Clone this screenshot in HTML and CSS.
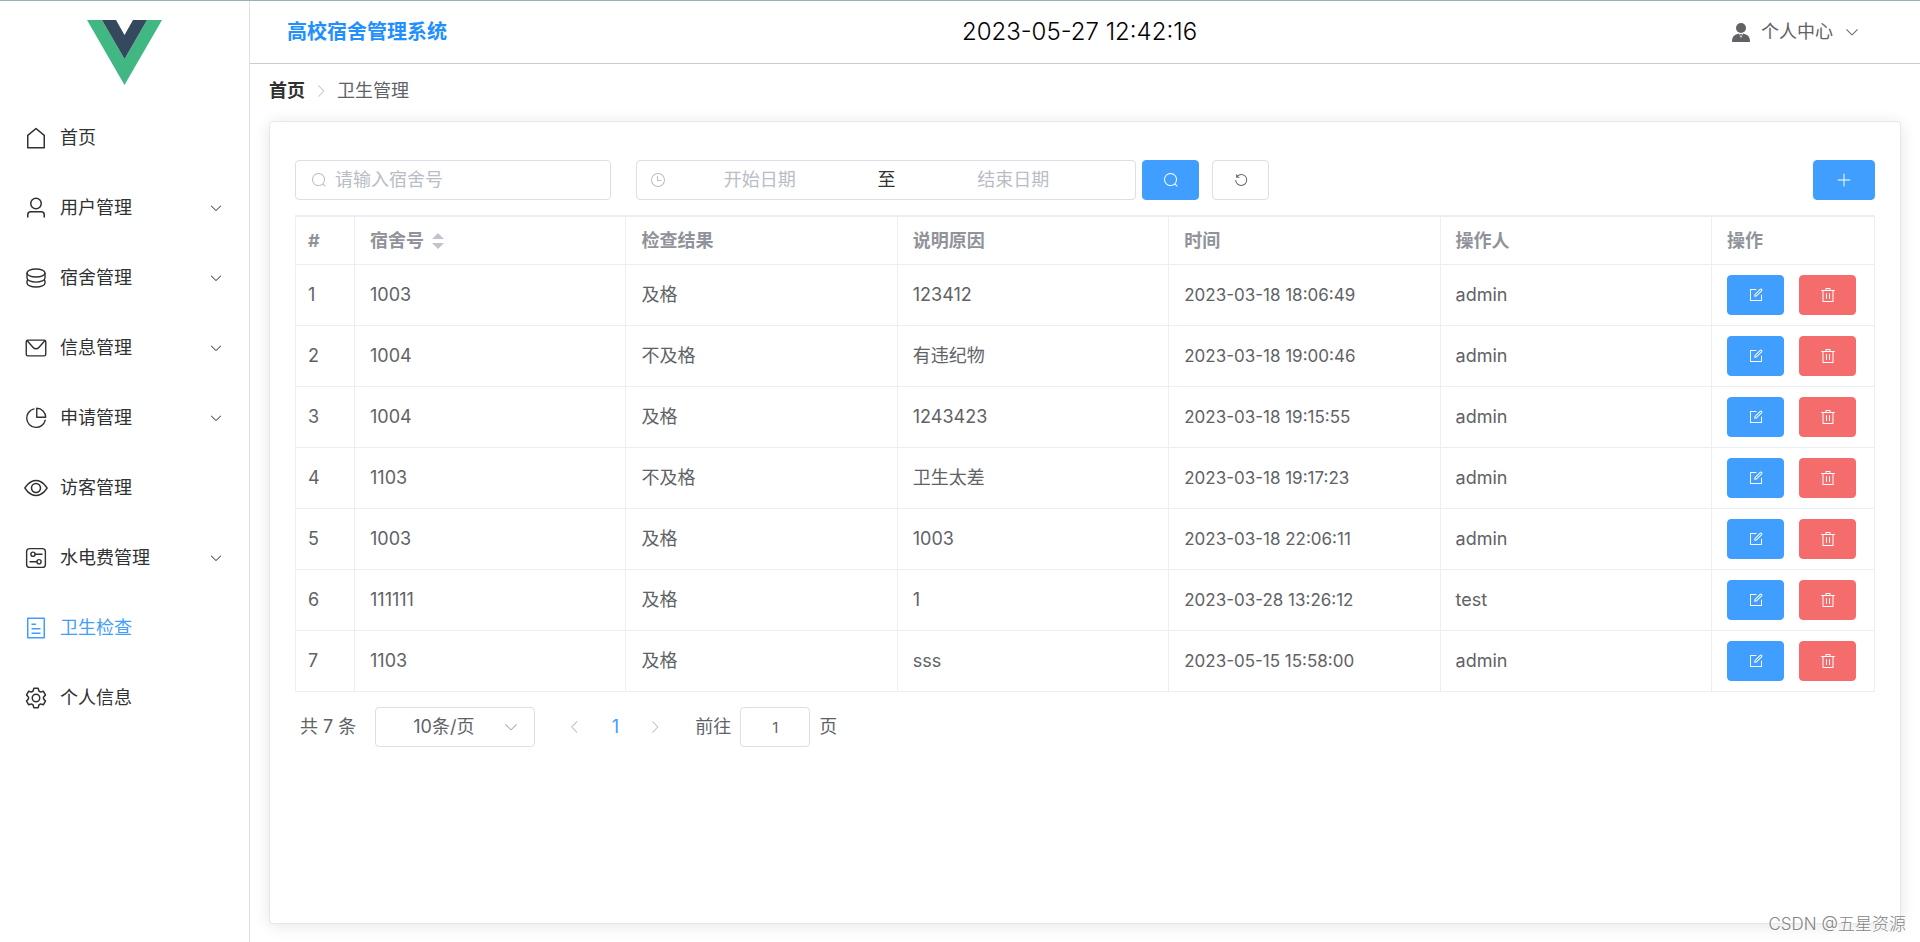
FILE: index.html
```html
<!DOCTYPE html>
<html lang="zh-CN">
<head>
<meta charset="utf-8">
<title>高校宿舍管理系统</title>
<link rel="stylesheet" href="styles.css">
</head>
<body>
<svg class="sprite" aria-hidden="true">
  <symbol id="i-house" viewBox="0 0 1024 1024"><path d="M192 413.952V896h640V413.952L512 147.328 192 413.952zM139.52 374.4l352-293.312a32 32 0 0 1 40.96 0l352 293.312A32 32 0 0 1 896 398.976V928a32 32 0 0 1-32 32H160a32 32 0 0 1-32-32V398.976a32 32 0 0 1 11.52-24.576z"/></symbol>
  <symbol id="i-user" viewBox="0 0 1024 1024"><path d="M512 512a192 192 0 1 0 0-384 192 192 0 0 0 0 384zm0 64a256 256 0 1 1 0-512 256 256 0 0 1 0 512zm320 320v-96a96 96 0 0 0-96-96H288a96 96 0 0 0-96 96v96a32 32 0 1 1-64 0v-96a160 160 0 0 1 160-160h448a160 160 0 0 1 160 160v96a32 32 0 1 1-64 0z"/></symbol>
  <symbol id="i-coin" viewBox="0 0 1024 1024"><g class="line"><ellipse cx="512" cy="300" rx="384" ry="172"/><path d="M128 310v204c0 96 172 174 384 174s384-78 384-174V310M160 600c-22 26-32 50-32 76v46c0 96 172 174 384 174s384-78 384-174v-46c0-26-10-50-32-76"/></g></symbol>
  <symbol id="i-message" viewBox="0 0 1024 1024"><g class="line"><rect x="96" y="176" width="832" height="672" rx="72"/><path d="M128 192l262 296c68 76 176 76 244 0l262-296"/></g></symbol>
  <symbol id="i-pie" viewBox="0 0 1024 1024"><g class="line"><path d="M424 124a400 400 0 1 0 482 482"/><path d="M544 98v382h382A384 384 0 0 0 544 98z"/></g></symbol>
  <symbol id="i-view" viewBox="0 0 1024 1024"><path d="M512 160c320 0 512 352 512 352S832 864 512 864 0 512 0 512s192-352 512-352zm0 64c-225.28 0-384.128 208.064-436.8 288 52.608 79.872 211.456 288 436.8 288 225.28 0 384.128-208.064 436.8-288-52.608-79.872-211.456-288-436.8-288zm0 64a224 224 0 1 1 0 448 224 224 0 0 1 0-448zm0 64a160.192 160.192 0 0 0-160 160c0 88.192 71.744 160 160 160s160-71.808 160-160-71.744-160-160-160z"/></symbol>
  <symbol id="i-setup" viewBox="0 0 1024 1024"><g class="line"><rect x="112" y="112" width="800" height="800" rx="128"/><circle cx="384" cy="352" r="90"/><path d="M474 352h294M256 672h294"/><circle cx="640" cy="672" r="90"/></g></symbol>
  <symbol id="i-tickets" viewBox="0 0 1024 1024"><path d="M192 128v768h640V128H192zm-32-64h704a32 32 0 0 1 32 32v832a32 32 0 0 1-32 32H160a32 32 0 0 1-32-32V96a32 32 0 0 1 32-32zm160 448h384v64H320v-64zm0-192h192v64H320v-64zm0 384h384v64H320v-64z"/></symbol>
  <symbol id="i-setting" viewBox="0 0 1024 1024"><path d="M600.704 64a32 32 0 0 1 30.464 22.208l35.2 109.376c14.784 7.232 28.928 15.36 42.432 24.512l112.384-24.192a32 32 0 0 1 34.432 15.36L944.32 364.8a32 32 0 0 1-4.032 37.504l-77.12 85.12a357.12 357.12 0 0 1 0 49.024l77.12 85.248a32 32 0 0 1 4.032 37.504l-88.704 153.6a32 32 0 0 1-34.432 15.296L708.8 803.904c-13.44 9.088-27.648 17.28-42.368 24.512l-35.264 109.376A32 32 0 0 1 600.704 960H423.296a32 32 0 0 1-30.464-22.208L357.696 828.48a351.616 351.616 0 0 1-42.56-24.64l-112.32 24.256a32 32 0 0 1-34.432-15.36L79.68 659.2a32 32 0 0 1 4.032-37.504l77.12-85.248a357.12 357.12 0 0 1 0-48.896l-77.12-85.248A32 32 0 0 1 79.68 364.8l88.704-153.6a32 32 0 0 1 34.432-15.296l112.32 24.256c13.568-9.152 27.776-17.408 42.56-24.64l35.2-109.312A32 32 0 0 1 423.232 64H600.64zm-23.424 64H446.72l-36.352 113.088-24.512 11.968a294.113 294.113 0 0 0-34.816 20.096l-22.656 15.36-116.224-25.088-65.28 113.152 79.68 88.192-1.92 27.136a293.12 293.12 0 0 0 0 40.192l1.92 27.136-79.808 88.192 65.344 113.152 116.224-25.024 22.656 15.296a294.113 294.113 0 0 0 34.816 20.096l24.512 11.968L446.72 896h130.688l36.48-113.152 24.448-11.904a288.282 288.282 0 0 0 34.752-20.096l22.592-15.296 116.288 25.024 65.28-113.152-79.744-88.192 1.92-27.136a293.12 293.12 0 0 0 0-40.256l-1.92-27.136 79.808-88.128-65.344-113.152-116.288 24.96-22.592-15.232a287.616 287.616 0 0 0-34.752-20.096l-24.448-11.904L577.344 128zM512 320a192 192 0 1 1 0 384 192 192 0 0 1 0-384zm0 64a128 128 0 1 0 0 256 128 128 0 0 0 0-256z"/></symbol>
  <symbol id="i-down" viewBox="0 0 1024 1024"><path d="M831.872 340.864 512 652.672 192.128 340.864a30.592 30.592 0 0 0-42.752 0 29.12 29.12 0 0 0 0 41.6L489.664 714.24a32 32 0 0 0 44.672 0l340.288-331.712a29.12 29.12 0 0 0 0-41.728 30.592 30.592 0 0 0-42.752 0z"/></symbol>
  <symbol id="i-right" viewBox="0 0 1024 1024"><path d="M340.864 149.312a30.592 30.592 0 0 0 0 42.752L652.736 512 340.864 831.872a30.592 30.592 0 0 0 0 42.752 29.12 29.12 0 0 0 41.728 0L714.24 534.336a32 32 0 0 0 0-44.672L382.592 149.376a29.12 29.12 0 0 0-41.728 0z"/></symbol>
  <symbol id="i-left" viewBox="0 0 1024 1024"><path d="M609.408 149.376 277.76 489.6a32 32 0 0 0 0 44.672l331.648 340.352a29.12 29.12 0 0 0 41.728 0 30.592 30.592 0 0 0 0-42.752L339.264 511.936l311.872-319.872a30.592 30.592 0 0 0 0-42.688 29.12 29.12 0 0 0-41.728 0z"/></symbol>
  <symbol id="i-search" viewBox="0 0 1024 1024"><path d="m795.904 750.72 124.992 124.928a32 32 0 0 1-45.248 45.248L750.656 795.904a416 416 0 1 1 45.248-45.248zM480 832a352 352 0 1 0 0-704 352 352 0 0 0 0 704z"/></symbol>
  <symbol id="i-clock" viewBox="0 0 1024 1024"><path d="M512 896a384 384 0 1 0 0-768 384 384 0 0 0 0 768zm0 64a448 448 0 1 1 0-896 448 448 0 0 1 0 896zM480 256a32 32 0 0 1 32 32v224h192a32 32 0 0 1 0 64H480a32 32 0 0 1-32-32V288a32 32 0 0 1 32-32z"/></symbol>
  <symbol id="i-refresh" viewBox="0 0 1024 1024"><path d="M289.088 296.704h92.992a32 32 0 0 1 0 64H232.96a32 32 0 0 1-32-32V179.712a32 32 0 0 1 64 0v50.56a384 384 0 0 1 643.84 282.88 384 384 0 0 1-383.936 384 384 384 0 0 1-384-384h64a320 320 0 1 0 640 0 320 320 0 0 0-555.712-216.448z"/></symbol>
  <symbol id="i-plus" viewBox="0 0 1024 1024"><path d="M480 480V128a32 32 0 0 1 64 0v352h352a32 32 0 1 1 0 64H544v352a32 32 0 1 1-64 0V544H128a32 32 0 0 1 0-64h352z"/></symbol>
  <symbol id="i-edit" viewBox="0 0 1024 1024"><path d="M832 512a32 32 0 1 1 64 0v352a32 32 0 0 1-32 32H160a32 32 0 0 1-32-32V160a32 32 0 0 1 32-32h352a32 32 0 0 1 0 64H192v640h640V512z"/><path d="m469.952 554.24 52.8-7.552L847.104 222.4a32 32 0 1 0-45.248-45.248L477.44 501.44l-7.552 52.8zm422.4-422.4a96 96 0 0 1 0 135.808l-331.84 331.84a32 32 0 0 1-18.112 9.088L436.8 623.68a32 32 0 0 1-36.224-36.224l15.104-105.6a32 32 0 0 1 9.024-18.112l331.904-331.84a96 96 0 0 1 135.744 0z"/></symbol>
  <symbol id="i-delete" viewBox="0 0 1024 1024"><path d="M160 256H96a32 32 0 0 1 0-64h256V95.936a32 32 0 0 1 32-32h256a32 32 0 0 1 32 32V192h256a32 32 0 1 1 0 64h-64v672a32 32 0 0 1-32 32H192a32 32 0 0 1-32-32V256zm448-64v-64H416v64h192zM224 896h576V256H224v640zm192-128a32 32 0 0 1-32-32V416a32 32 0 0 1 64 0v320a32 32 0 0 1-32 32zm192 0a32 32 0 0 1-32-32V416a32 32 0 0 1 64 0v320a32 32 0 0 1-32 32z"/></symbol>
  <symbol id="i-person" viewBox="0 0 18 19"><circle cx="9" cy="5" r="5"/><path d="M0 19c0-4 1-6 3-7 1-.6 2.500-1 4-1.500L9 15l2-4.500c1.500.5 3 .9 4 1.500 2 1 3 3 3 7z"/><path d="M8 11h2l-.5 2h-1z"/></symbol>
</svg>

<div class="app">
  <aside class="sidebar">
    <svg class="logo" viewBox="0 0 75 65" role="img" aria-label="Vue">
      <path fill="#41b883" d="M0 0h15l22.500 39L60 0h15L37.500 65z"/>
      <path fill="#34495e" d="M15 0h14l8.500 15L46 0h14L37.500 39z"/>
    </svg>
    <nav class="menu">
      <a class="item" href="#"><svg class="icon"><use href="#i-house"/></svg><span>首页</span></a>
      <a class="item" href="#"><svg class="icon"><use href="#i-user"/></svg><span>用户管理</span><svg class="arrow"><use href="#i-down"/></svg></a>
      <a class="item" href="#"><svg class="icon"><use href="#i-coin"/></svg><span>宿舍管理</span><svg class="arrow"><use href="#i-down"/></svg></a>
      <a class="item" href="#"><svg class="icon"><use href="#i-message"/></svg><span>信息管理</span><svg class="arrow"><use href="#i-down"/></svg></a>
      <a class="item" href="#"><svg class="icon"><use href="#i-pie"/></svg><span>申请管理</span><svg class="arrow"><use href="#i-down"/></svg></a>
      <a class="item" href="#"><svg class="icon"><use href="#i-view"/></svg><span>访客管理</span></a>
      <a class="item" href="#"><svg class="icon"><use href="#i-setup"/></svg><span>水电费管理</span><svg class="arrow"><use href="#i-down"/></svg></a>
      <a class="item active" href="#" aria-current="page"><svg class="icon"><use href="#i-tickets"/></svg><span>卫生检查</span></a>
      <a class="item" href="#"><svg class="icon"><use href="#i-setting"/></svg><span>个人信息</span></a>
    </nav>
  </aside>

  <div class="page">
    <header class="header">
      <h1 class="title">高校宿舍管理系统</h1>
      <time class="now" datetime="2023-05-27T12:42:16">2023-05-27 12:42:16</time>
      <button class="account" type="button"><svg class="avatar"><use href="#i-person"/></svg><span>个人中心</span><svg class="caret"><use href="#i-down"/></svg></button>
    </header>

    <main class="main">
      <nav class="crumbs" aria-label="面包屑"><a href="#">首页</a><svg class="sep"><use href="#i-right"/></svg><span>卫生管理</span></nav>

      <section class="card">
        <form class="toolbar">
          <label class="field search"><svg class="small"><use href="#i-search"/></svg><input type="text" placeholder="请输入宿舍号" aria-label="宿舍号"></label>
          <div class="field range">
            <svg class="small"><use href="#i-clock"/></svg>
            <input type="text" placeholder="开始日期" aria-label="开始日期">
            <span>至</span>
            <input type="text" placeholder="结束日期" aria-label="结束日期">
          </div>
          <div class="actions">
            <button class="btn primary" type="button" aria-label="搜索"><svg class="small"><use href="#i-search"/></svg></button>
            <button class="btn" type="button" aria-label="重置"><svg class="small"><use href="#i-refresh"/></svg></button>
          </div>
          <button class="btn primary add" type="button" aria-label="新增"><svg class="small"><use href="#i-plus"/></svg></button>
        </form>

        <table class="table">
          <colgroup><col class="c-index"><col><col><col><col><col><col class="c-ops"></colgroup>
          <thead>
            <tr><th>#</th><th>宿舍号<svg class="sort" viewBox="0 0 12 16"><path d="M0 6h12L6 0zM0 10h12l-6 6z"/></svg></th><th>检查结果</th><th>说明原因</th><th>时间</th><th>操作人</th><th>操作</th></tr>
          </thead>
          <tbody>
            <tr><td>1</td><td>1003</td><td>及格</td><td>123412</td><td class="date">2023-03-18 18:06:49</td><td>admin</td><td><div class="ops"><button class="btn primary" type="button" aria-label="编辑"><svg class="small"><use href="#i-edit"/></svg></button><button class="btn danger" type="button" aria-label="删除"><svg class="small"><use href="#i-delete"/></svg></button></div></td></tr>
            <tr><td>2</td><td>1004</td><td>不及格</td><td>有违纪物</td><td class="date">2023-03-18 19:00:46</td><td>admin</td><td><div class="ops"><button class="btn primary" type="button" aria-label="编辑"><svg class="small"><use href="#i-edit"/></svg></button><button class="btn danger" type="button" aria-label="删除"><svg class="small"><use href="#i-delete"/></svg></button></div></td></tr>
            <tr><td>3</td><td>1004</td><td>及格</td><td>1243423</td><td class="date">2023-03-18 19:15:55</td><td>admin</td><td><div class="ops"><button class="btn primary" type="button" aria-label="编辑"><svg class="small"><use href="#i-edit"/></svg></button><button class="btn danger" type="button" aria-label="删除"><svg class="small"><use href="#i-delete"/></svg></button></div></td></tr>
            <tr><td>4</td><td>1103</td><td>不及格</td><td>卫生太差</td><td class="date">2023-03-18 19:17:23</td><td>admin</td><td><div class="ops"><button class="btn primary" type="button" aria-label="编辑"><svg class="small"><use href="#i-edit"/></svg></button><button class="btn danger" type="button" aria-label="删除"><svg class="small"><use href="#i-delete"/></svg></button></div></td></tr>
            <tr><td>5</td><td>1003</td><td>及格</td><td>1003</td><td class="date">2023-03-18 22:06:11</td><td>admin</td><td><div class="ops"><button class="btn primary" type="button" aria-label="编辑"><svg class="small"><use href="#i-edit"/></svg></button><button class="btn danger" type="button" aria-label="删除"><svg class="small"><use href="#i-delete"/></svg></button></div></td></tr>
            <tr><td>6</td><td>111111</td><td>及格</td><td>1</td><td class="date">2023-03-28 13:26:12</td><td>test</td><td><div class="ops"><button class="btn primary" type="button" aria-label="编辑"><svg class="small"><use href="#i-edit"/></svg></button><button class="btn danger" type="button" aria-label="删除"><svg class="small"><use href="#i-delete"/></svg></button></div></td></tr>
            <tr><td>7</td><td>1103</td><td>及格</td><td>sss</td><td class="date">2023-05-15 15:58:00</td><td>admin</td><td><div class="ops"><button class="btn primary" type="button" aria-label="编辑"><svg class="small"><use href="#i-edit"/></svg></button><button class="btn danger" type="button" aria-label="删除"><svg class="small"><use href="#i-delete"/></svg></button></div></td></tr>
          </tbody>
        </table>

        <div class="pager">
          <span class="total">共 7 条</span>
          <div class="size"><select aria-label="每页条数"><option>10条/页</option></select><svg class="small"><use href="#i-down"/></svg></div>
          <div class="pages">
            <button type="button" disabled aria-label="上一页"><svg class="small"><use href="#i-left"/></svg></button>
            <button class="current" type="button">1</button>
            <button type="button" disabled aria-label="下一页"><svg class="small"><use href="#i-right"/></svg></button>
          </div>
          <label class="jump">前往<input type="text" value="1">页</label>
        </div>
      </section>
    </main>
  </div>
</div>
<div class="watermark">CSDN @五星资源</div>
</body>
</html>
```
FILE: styles.css
```css
* { box-sizing: border-box; }

body {
  margin: 0;
  background: #fff;
  color: #606266;
  font-family: Inter, "Noto Sans CJK SC", sans-serif;
  font-size: 18px;
  font-weight: 400;
  line-height: 24px;
}

button, input, select { margin: 0; font: inherit; color: inherit; }
button { cursor: pointer; }
a { color: inherit; text-decoration: none; }
svg { flex: none; fill: currentColor; }

.sprite { position: absolute; width: 0; height: 0; }
.line { fill: none; stroke: currentColor; stroke-width: 60; stroke-linecap: round; stroke-linejoin: round; }

.app {
  display: flex;
  min-height: 100vh;
  border-top: 1px solid #8fb4b6;
}

/* Sidebar */
.sidebar {
  display: flex;
  flex-direction: column;
  flex: none;
  width: 250px;
  padding-top: 19px;
  border-right: 1px solid #e0e0e0;
}
.logo { align-self: center; width: 75px; height: 65px; }
.menu { display: flex; flex-direction: column; padding-top: 18px; }
.item {
  display: flex;
  align-items: center;
  gap: 12px;
  height: 70px;
  padding: 0 26px 0 24px;
  color: #303133;
}
.item.active { color: #409eff; }
.icon { width: 24px; height: 24px; }
.arrow { width: 14px; height: 14px; margin-left: auto; }

/* Header */
.page { display: flex; flex-direction: column; flex: 1; min-width: 0; }
.header {
  display: grid;
  grid-template-columns: 1fr auto 1fr;
  align-items: center;
  height: 63px;
  padding: 0 48px 0 37px;
  border-bottom: 1px solid #ccc;
}
.title { margin: 0; color: #1e90ff; font-size: 20px; font-weight: 700; }
.now { color: #000; font-size: 24px; font-weight: 300; }
.account {
  display: flex;
  align-items: center;
  justify-self: end;
  gap: 11px;
  padding: 0 12px;
  border: 0;
  background: none;
}
.avatar { width: 18px; height: 19px; }
.caret { width: 16px; height: 16px; }

/* Content */
.main { display: flex; flex-direction: column; flex: 1; padding: 0 19px 18px; }
.crumbs { display: flex; align-items: center; gap: 8px; height: 57px; padding-bottom: 3px; }
.crumbs a { color: #303133; font-weight: 700; }
.sep { width: 16px; height: 16px; color: #c0c4cc; }

.card {
  flex: 1;
  padding: 38px 25px 24px;
  border: 1px solid #e4e7ed;
  border-radius: 4px;
  background: #fff;
  box-shadow: 0 2px 16px rgba(0, 0, 0, 0.1);
}

.toolbar { display: flex; align-items: center; padding-bottom: 15px; }
.field {
  display: flex;
  align-items: center;
  height: 40px;
  border: 1px solid #dcdfe6;
  border-radius: 4px;
}
.field input {
  width: 100%;
  min-width: 0;
  padding: 0;
  border: 0;
  outline: 0;
  background: none;
}
.field input::placeholder { color: #b9bdc6; opacity: 1; }
.field svg { color: #b9bdc6; }
.small { width: 16px; height: 16px; }
.search { gap: 8px; width: 316px; margin-right: 25px; padding: 0 15px; }
.range { width: 500px; padding: 0 28px 0 13px; }
.range input { flex: 1; text-align: center; }
.range span { flex: none; padding: 0 24px; color: #303133; }
.actions { display: flex; gap: 13px; margin-left: 6px; }

.btn {
  display: flex;
  align-items: center;
  justify-content: center;
  width: 57px;
  height: 40px;
  padding: 0;
  border: 1px solid #dcdfe6;
  border-radius: 4px;
  background: #fff;
}
.btn.primary { border-color: #409eff; background: #409eff; color: #fff; }
.btn.danger { border-color: #f56c6c; background: #f56c6c; color: #fff; }
.btn.add { width: 62px; margin-left: auto; }

/* Table */
.table {
  width: 100%;
  table-layout: fixed;
  border-collapse: separate;
  border-spacing: 0;
  border-top: 2px solid #ebeef5;
  border-left: 1px solid #ebeef5;
}
.c-index { width: 59px; }
.c-ops { width: 163px; }
.table th, .table td {
  height: 61px;
  padding: 0 15px;
  border-right: 1px solid #ebeef5;
  border-bottom: 1px solid #ebeef5;
  text-align: left;
}
.table th { height: 48px; color: #909399; font-weight: 700; }
.table th:first-child, .table td:first-child { padding: 0 12px; }
.table .date { font-size: 17px; }
.sort { width: 12px; height: 16px; margin-left: 8px; color: #c0c4cc; vertical-align: -2px; }
.ops { display: flex; gap: 15px; }

/* Pagination */
.pager { display: flex; align-items: center; padding: 15px 5px 0; }
.size { display: flex; align-items: center; width: 160px; margin-left: 19px; }
.size select {
  width: 100%;
  height: 40px;
  padding: 0 38px 0 15px;
  border: 1px solid #dcdfe6;
  border-radius: 4px;
  background: none;
  text-align: center;
  text-align-last: center;
  appearance: none;
}
.size svg { margin-left: -32px; color: #a8abb2; pointer-events: none; }
.pages { display: flex; margin-left: 20px; }
.pages button {
  display: flex;
  align-items: center;
  justify-content: center;
  width: 40px;
  height: 40px;
  padding: 0;
  border: 0;
  background: none;
  color: #b9bdc6;
}
.pages .current { color: #409eff; }
.jump { display: flex; align-items: center; gap: 9px; margin-left: 20px; }
.jump input {
  width: 70px;
  height: 40px;
  border: 1px solid #dcdfe6;
  border-radius: 4px;
  text-align: center;
  font-size: 15px;
}

.watermark { position: absolute; right: 14px; bottom: 6px; color: #858585; font-size: 17px; font-weight: 300; text-shadow: 1px 1px 0 #fff; }
```
